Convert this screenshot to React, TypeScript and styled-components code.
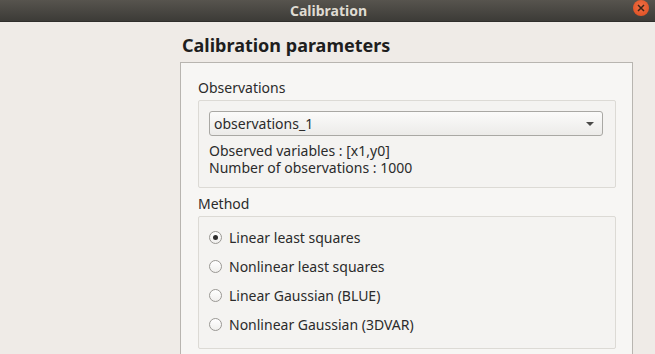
import React from "react";
import styled, { createGlobalStyle } from "styled-components";

const GlobalStyle = createGlobalStyle`
  html, body {
    margin: 0;
    padding: 0;
    background: #efebe7;
    font-family: "Noto Sans", "Open Sans", sans-serif;
    color: #2b2b2b;
  }
`;

const Window = styled.div`
  width: 655px;
  height: 354px;
  display: flex;
  flex-direction: column;
  overflow: hidden;
  background: #efebe7;
`;

const TitleBar = styled.div`
  position: relative;
  height: 22px;
  flex-shrink: 0;
  display: flex;
  align-items: center;
  justify-content: center;
  background: linear-gradient(#57544e, #3c3b37);
  border-bottom: 1px solid #2f2e2b;
  box-sizing: border-box;
`;

const TitleText = styled.span`
  font-size: 14px;
  font-weight: bold;
  color: #dfdbd2;
  padding-left: 2px;
`;

const CloseButton = styled.div`
  position: absolute;
  right: 6px;
  top: 0;
  width: 16px;
  height: 16px;
  border-radius: 50%;
  background: radial-gradient(circle at 50% 40%, #f07046, #dc4a1c);
  display: flex;
  align-items: center;
  justify-content: center;
`;

const Body = styled.div`
  flex: 1;
  display: flex;
  flex-direction: column;
  padding-left: 180px;
  width: 453px;
`;

const Heading = styled.h1`
  margin: 0;
  padding: 12px 0 0 2px;
  height: 40px;
  box-sizing: border-box;
  font-size: 18px;
  font-weight: bold;
  color: #1e1e1e;
  line-height: 22px;
`;

const Panel = styled.div`
  flex: 1;
  background: #f7f6f4;
  border: 1px solid #b8b5b0;
  border-bottom: none;
  padding: 16px 16px 0 17px;
  display: flex;
  flex-direction: column;
`;

const GroupLabel = styled.div`
  font-size: 14px;
  line-height: 18px;
  margin-bottom: 3px;
  color: #2b2b2b;
`;

const GroupBox = styled.div`
  background: #f4f3f1;
  border: 1px solid #dcdad5;
  border-radius: 2px;
  display: flex;
  flex-direction: column;
  margin-bottom: 7px;
  box-sizing: border-box;
`;

const ObsBox = styled(GroupBox)`
  padding: 10px 12px 10px 10px;
  height: 88px;
`;

const MethodBox = styled(GroupBox)`
  padding: 6px 0 0 10px;
  height: 133px;
`;

const Combo = styled.div`
  height: 25px;
  box-sizing: border-box;
  border: 1px solid #a9a8a4;
  border-radius: 3px;
  background: linear-gradient(#fbfbfa, #ecebe9);
  display: flex;
  align-items: center;
  justify-content: space-between;
  padding: 0 8px 0 4px;
  font-size: 14px;
  color: #2b2b2b;
  margin-bottom: 6px;
`;

const Arrow = styled.div`
  width: 0;
  height: 0;
  border-left: 4px solid transparent;
  border-right: 4px solid transparent;
  border-top: 4px solid #4a4a48;
  margin-top: 1px;
`;

const InfoText = styled.div`
  font-size: 14px;
  line-height: 17px;
  color: #2b2b2b;
`;

const RadioRow = styled.label`
  display: flex;
  align-items: center;
  height: 29px;
  font-size: 14px;
  color: #2b2b2b;
`;

const RadioCircle = styled.span<{ checked: boolean }>`
  width: 13px;
  height: 13px;
  box-sizing: border-box;
  border-radius: 50%;
  border: 1px solid #9a9894;
  background: linear-gradient(#ffffff, #f0efed);
  margin-right: 7px;
  display: flex;
  align-items: center;
  justify-content: center;
  &::after {
    content: "";
    display: ${({ checked }) => (checked ? "block" : "none")};
    width: 5px;
    height: 5px;
    border-radius: 50%;
    background: #2e2e2e;
  }
`;

const methods = [
  "Linear least squares",
  "Nonlinear least squares",
  "Linear Gaussian (BLUE)",
  "Nonlinear Gaussian (3DVAR)",
];

const App: React.FC = () => {
  return (
    <>
      <GlobalStyle />
      <Window>
        <TitleBar>
          <TitleText>Calibration</TitleText>
          <CloseButton>
            <svg width="8" height="8" viewBox="0 0 8 8">
              <path d="M1 1 L7 7 M7 1 L1 7" stroke="#3a2418" strokeWidth="1.5" />
            </svg>
          </CloseButton>
        </TitleBar>
        <Body>
          <Heading>Calibration parameters</Heading>
          <Panel>
            <GroupLabel>Observations</GroupLabel>
            <ObsBox>
              <Combo>
                <span>observations_1</span>
                <Arrow />
              </Combo>
              <InfoText>
                Observed variables : [x1,y0]
                <br />
                Number of observations : 1000
              </InfoText>
            </ObsBox>
            <GroupLabel>Method</GroupLabel>
            <MethodBox>
              {methods.map((m, i) => (
                <RadioRow key={m}>
                  <RadioCircle checked={i === 0} />
                  {m}
                </RadioRow>
              ))}
            </MethodBox>
          </Panel>
        </Body>
      </Window>
    </>
  );
};

export default App;
